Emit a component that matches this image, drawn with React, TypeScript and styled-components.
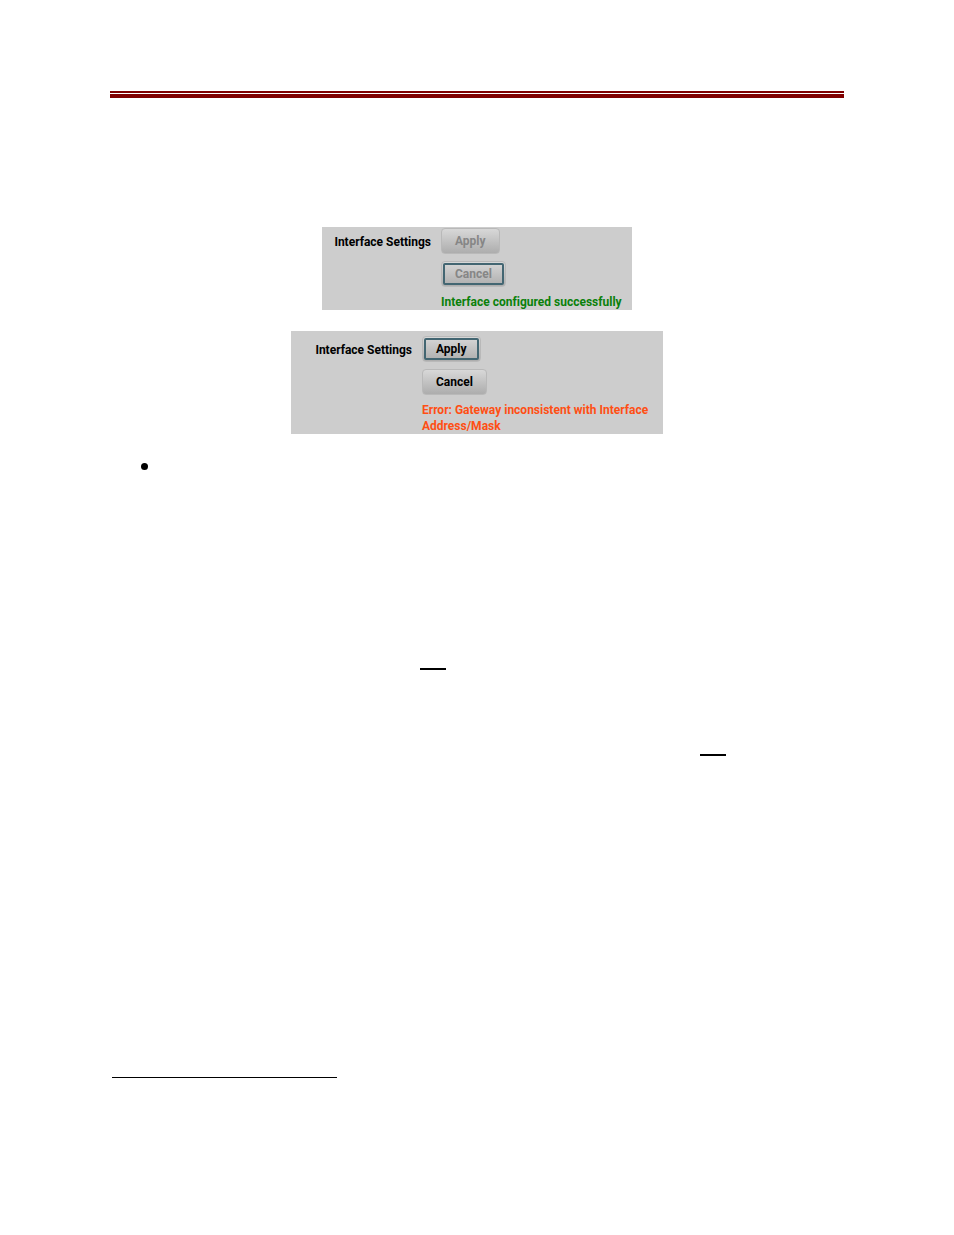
import React from "react";
import styled, { createGlobalStyle } from "styled-components";

const GlobalStyle = createGlobalStyle`
  *, *::before, *::after { box-sizing: border-box; }
  body {
    margin: 0;
    background: #fff;
    color: #000;
    font: bold 12px/16px Roboto, "Liberation Sans", Arial, sans-serif;
    font-variant-ligatures: none;
  }
`;

const Page = styled.main`
  display: flex;
  flex-direction: column;
  padding: 91px 110px 156px;
`;

const HeaderRule = styled.header`
  height: 7px;
  border-top: 2px solid #800000;
  border-bottom: 4px solid #800000;
`;

const Figures = styled.div`
  display: flex;
  flex-direction: column;
  align-items: center;
  gap: 21px;
  margin-top: 129px;
`;

const Panel = styled.section<{ $width: number; $label: number; $top: number }>`
  display: grid;
  grid-template-columns: ${(p) => p.$label}px 1fr;
  column-gap: 10px;
  width: ${(p) => p.$width}px;
  max-width: 100%;
  padding-top: ${(p) => p.$top}px;
  background: #cdcdcd;
`;

const PanelTitle = styled.h2`
  margin: 0;
  padding-top: 6px;
  font-size: 12px;
  line-height: 16px;
  text-align: right;
  white-space: nowrap;
`;

const Actions = styled.div`
  display: flex;
  flex-direction: column;
  align-items: flex-start;
  gap: 7px;
`;

const Button = styled.button<{ $focused?: boolean }>`
  height: 26px;
  padding: 0 13px;
  border: 1px solid #b9b9b9;
  border-radius: 4px;
  background: linear-gradient(#d8d8d8, #adadad);
  color: #000;
  font: inherit;
  outline: ${(p) => (p.$focused ? "2px solid #436672" : "none")};
  outline-offset: -4px;

  &:disabled {
    color: #868686;
  }
`;

const Message = styled.p<{ $error?: boolean }>`
  margin: 0;
  color: ${(p) => (p.$error ? "#ff4f14" : "#0a800a")};
`;

const BulletList = styled.ul`
  margin: 24px 0 0 31px;
  padding: 0;
  list-style: none;
`;

const BulletItem = styled.li`
  display: flex;
  align-items: center;
  height: 16px;

  &::before {
    content: "";
    width: 7px;
    height: 7px;
    border-radius: 50%;
    background: #000;
  }
`;

const Blank = styled.div<{ $start: number; $space: number }>`
  width: 26px;
  height: 2px;
  margin: ${(p) => p.$space}px 0 0 ${(p) => p.$start}px;
  background: #000;
`;

const FootnoteRule = styled.hr`
  width: 225px;
  height: 1px;
  margin: 321px 0 0 2px;
  border: 0;
  background: #000;
`;

export default function App() {
  return (
    <>
      <GlobalStyle />
      <Page>
        <HeaderRule />
        <Figures>
          <Panel $width={310} $label={109} $top={1}>
            <PanelTitle>Interface Settings</PanelTitle>
            <Actions>
              <Button type="button" disabled>Apply</Button>
              <Button type="button" disabled $focused>Cancel</Button>
              <Message role="status">Interface configured successfully</Message>
            </Actions>
          </Panel>
          <Panel $width={372} $label={121} $top={5}>
            <PanelTitle>Interface Settings</PanelTitle>
            <Actions>
              <Button type="button" $focused>Apply</Button>
              <Button type="button">Cancel</Button>
              <Message role="alert" $error>
                Error: Gateway inconsistent with Interface Address/Mask
              </Message>
            </Actions>
          </Panel>
        </Figures>
        <BulletList>
          <BulletItem />
        </BulletList>
        <Blank $start={310} $space={194} />
        <Blank $start={590} $space={84} />
        <FootnoteRule />
      </Page>
    </>
  );
}
